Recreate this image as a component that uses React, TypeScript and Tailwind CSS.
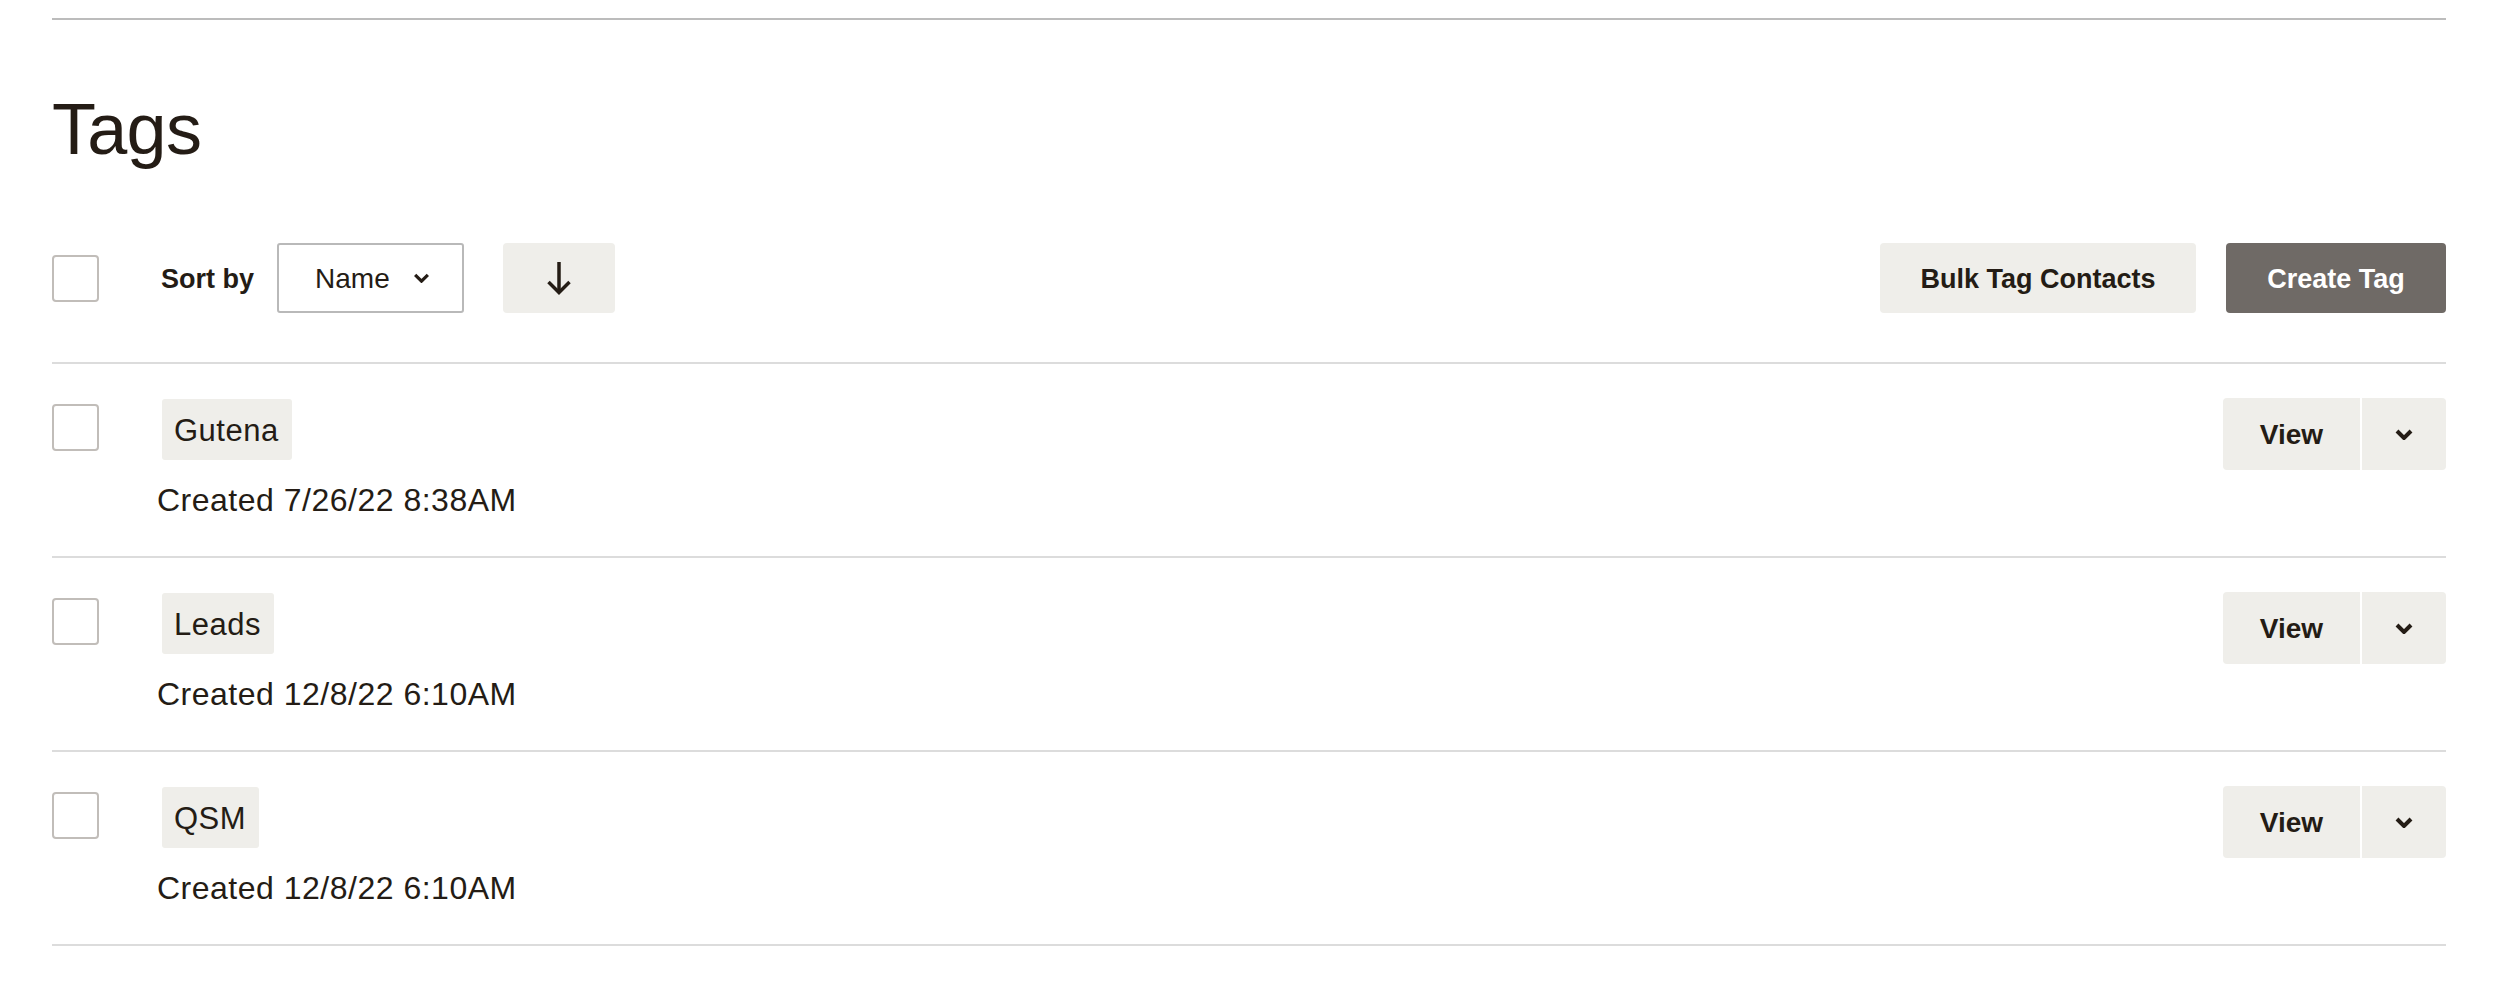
import React from "react";

function Chevron({ w = 17, h = 10, sw = 3.5 }: { w?: number; h?: number; sw?: number }) {
  return (
    <svg width={w} height={h} viewBox="0 0 18 11" fill="none">
      <polyline points="2,2 9,9 16,2" stroke="#241c15" strokeWidth={sw} strokeLinejoin="miter" />
    </svg>
  );
}

function ArrowDown() {
  return (
    <svg width="26" height="34" viewBox="0 0 26 34" fill="none">
      <line x1="13" y1="1" x2="13" y2="31" stroke="#241c15" strokeWidth="3.5" />
      <polyline points="2.5,21 13,31.5 23.5,21" stroke="#241c15" strokeWidth="3.5" fill="none" />
    </svg>
  );
}

function Checkbox({ className = "" }: { className?: string }) {
  return (
    <div
      className={
        "w-[47px] h-[47px] shrink-0 rounded-[4px] border-2 border-[#c1bdb9] bg-white " + className
      }
    />
  );
}

type Tag = { name: string; created: string };

const tags: Tag[] = [
  { name: "Gutena", created: "Created 7/26/22 8:38AM" },
  { name: "Leads", created: "Created 12/8/22 6:10AM" },
  { name: "QSM", created: "Created 12/8/22 6:10AM" },
];

function Row({ tag }: { tag: Tag }) {
  return (
    <div className="flex items-start pt-[34px] pb-[40px] border-b-2 border-[#dcdcdc]">
      <Checkbox className="mt-[6px]" />
      <div className="ml-[58px] flex flex-col items-start">
        <div className="ml-[5px] mt-[1px] h-[61px] flex items-center pt-[3px] pl-[12px] pr-[13px] rounded-[3px] bg-[#efeeea] text-[31px] tracking-[0.5px]">
          {tag.name}
        </div>
        <div className="mt-[24px] text-[32px] leading-[32px] tracking-[0.5px]">{tag.created}</div>
      </div>
      <div className="ml-auto flex items-stretch h-[72px] gap-[2px]">
        <button className="w-[137px] h-[72px] pt-[2px] bg-[#efeeea] rounded-l-[4px] text-[28px] font-bold flex items-center justify-center">
          View
        </button>
        <button className="w-[84px] h-[72px] bg-[#efeeea] rounded-r-[4px] flex items-center justify-center">
          <Chevron w={18} h={11} sw={4} />
        </button>
      </div>
    </div>
  );
}

export default function App() {
  return (
    <div className="min-h-screen bg-white pt-[18px] pl-[52px] pr-[56px] text-[#241c15] font-['Liberation_Sans',Arial,sans-serif]">
      <div className="border-t-2 border-[#bcbcbc]" />
      <h1 className="mt-[73px] text-[72px] leading-[72px] tracking-[-0.01em] font-normal">Tags</h1>

      <div className="mt-[78px] pb-[49px] border-b-2 border-[#dcdcdc]">
        <div className="flex items-center h-[70px]">
          <Checkbox />
          <span className="ml-[62px] pt-[2px] text-[27px] font-bold">Sort by</span>
          <div className="ml-[23px] w-[187px] h-[70px] border-2 border-[#b9b9b9] rounded-[3px] flex items-center pl-[36px]">
            <span className="pt-[2px] text-[28px]">Name</span>
            <span className="ml-[23px] flex items-center">
              <Chevron />
            </span>
          </div>
          <button className="ml-[39px] w-[112px] h-[70px] bg-[#efeeea] rounded-[4px] flex items-center justify-center">
            <ArrowDown />
          </button>
          <button className="ml-auto w-[316px] h-[70px] pt-[2px] bg-[#efeeea] rounded-[4px] text-[27px] font-bold flex items-center justify-center">
            Bulk Tag Contacts
          </button>
          <button className="ml-[30px] w-[220px] h-[70px] pt-[2px] bg-[#6f6a66] rounded-[4px] text-[27px] font-bold text-white flex items-center justify-center">
            Create Tag
          </button>
        </div>
      </div>

      {tags.map((t) => (
        <Row key={t.name} tag={t} />
      ))}
    </div>
  );
}
